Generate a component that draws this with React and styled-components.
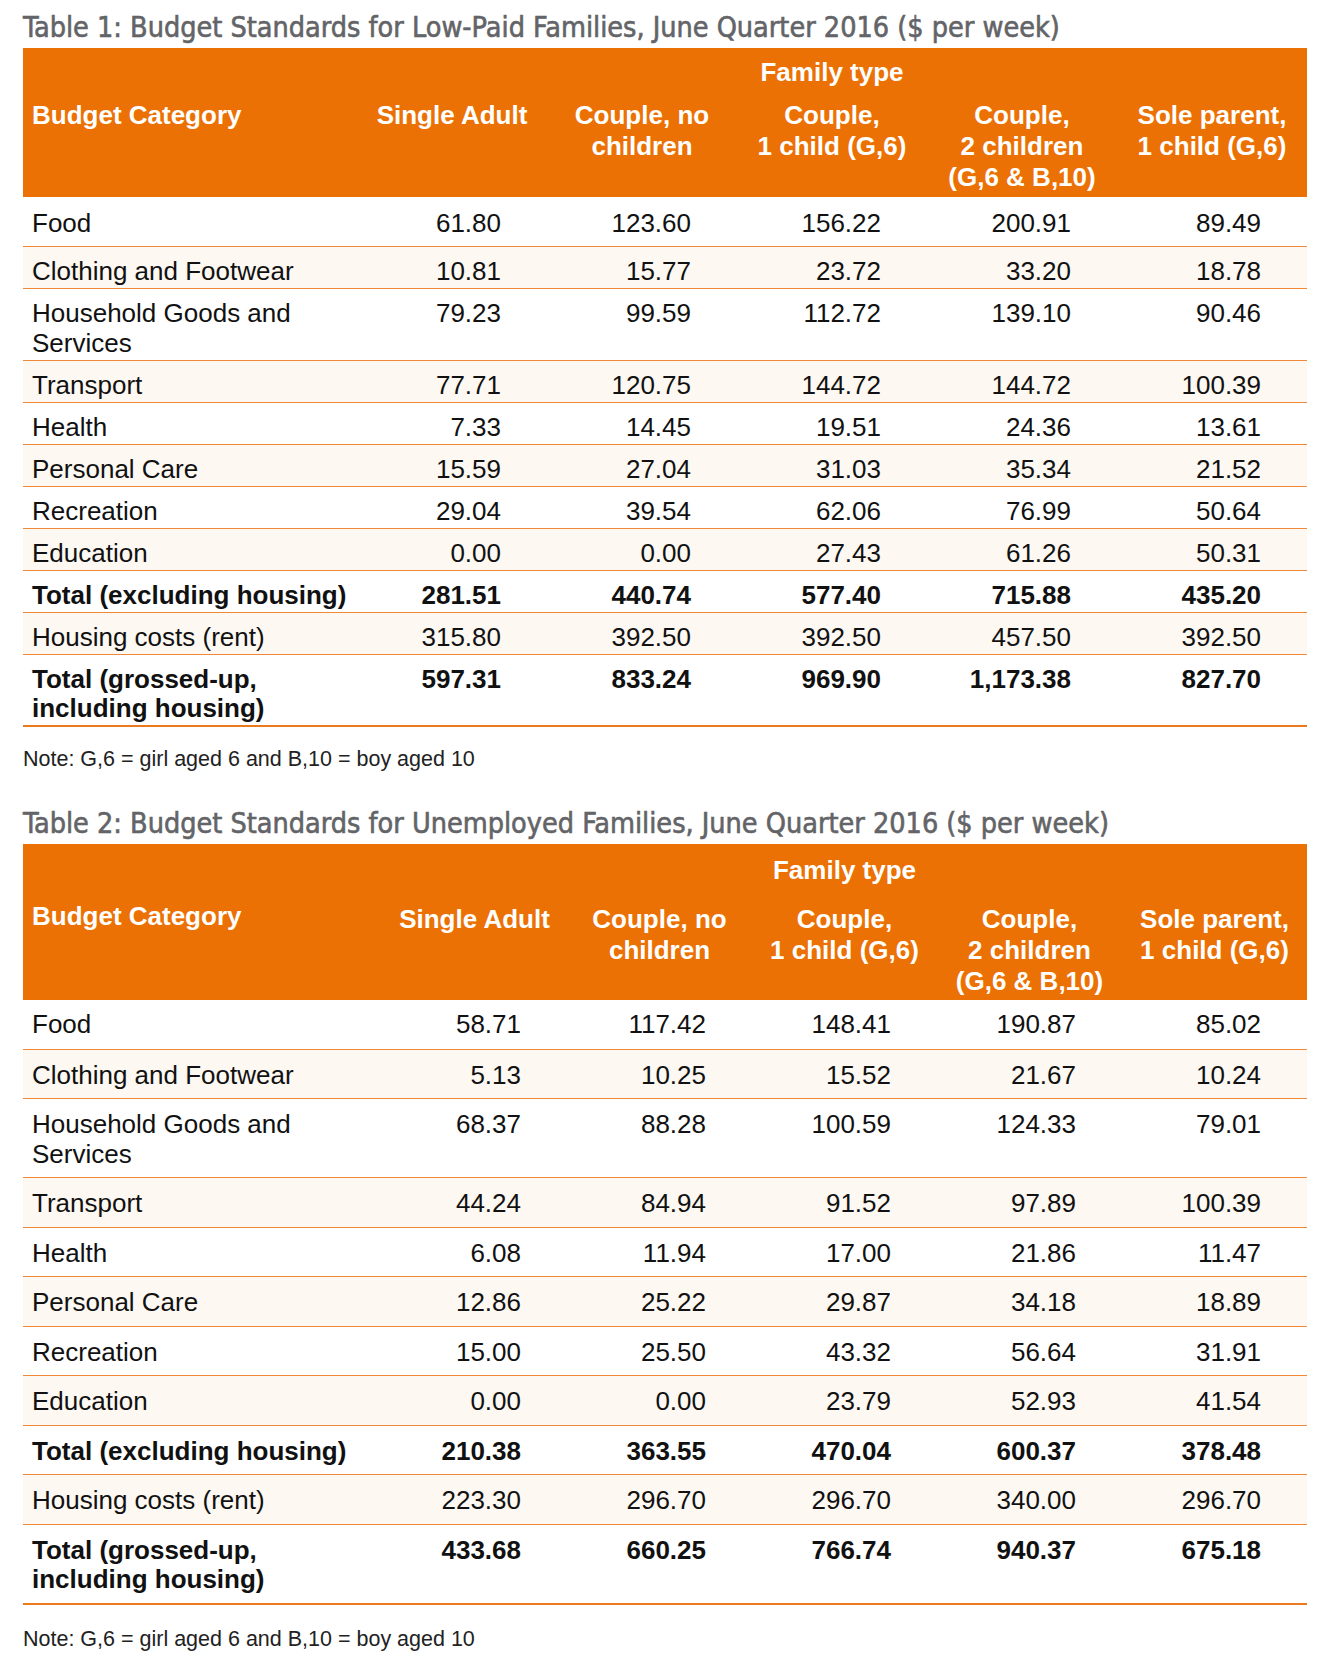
import styled, { createGlobalStyle } from "styled-components";

const GlobalStyle = createGlobalStyle`
  body {
    margin: 0;
    background: #ffffff;
  }
`;

const HEAD_LINES = [
  ["Single Adult"],
  ["Couple, no", "children"],
  ["Couple,", "1 child (G,6)"],
  ["Couple,", "2 children", "(G,6 & B,10)"],
  ["Sole parent,", "1 child (G,6)"],
];

const tables = [
  {
    title: "Table 1: Budget Standards for Low-Paid Families, June Quarter 2016 ($ per week)",
    firstCol: 334,
    numCol: 190,
    head: { top: 9, gap: 12, bottom: 4, lead: 0 },
    body: { first: [12, 7.5], rest: [10, 1.5] },
    noteGap: 20,
    rows: [
      [["Food"], ["61.80", "123.60", "156.22", "200.91", "89.49"]],
      [["Clothing and Footwear"], ["10.81", "15.77", "23.72", "33.20", "18.78"]],
      [["Household Goods and", "Services"], ["79.23", "99.59", "112.72", "139.10", "90.46"]],
      [["Transport"], ["77.71", "120.75", "144.72", "144.72", "100.39"]],
      [["Health"], ["7.33", "14.45", "19.51", "24.36", "13.61"]],
      [["Personal Care"], ["15.59", "27.04", "31.03", "35.34", "21.52"]],
      [["Recreation"], ["29.04", "39.54", "62.06", "76.99", "50.64"]],
      [["Education"], ["0.00", "0.00", "27.43", "61.26", "50.31"]],
      [["Total (excluding housing)"], ["281.51", "440.74", "577.40", "715.88", "435.20"], true],
      [["Housing costs (rent)"], ["315.80", "392.50", "392.50", "457.50", "392.50"]],
      [["Total (grossed-up,", "including housing)"], ["597.31", "833.24", "969.90", "1,173.38", "827.70"], true],
    ],
  },
  {
    title: "Table 2: Budget Standards for Unemployed Families, June Quarter 2016 ($ per week)",
    firstCol: 359,
    numCol: 185,
    head: { top: 11, gap: 18, bottom: 3, lead: 3 },
    body: { first: [10, 9], rest: [11, 8] },
    noteGap: 22,
    rows: [
      [["Food"], ["58.71", "117.42", "148.41", "190.87", "85.02"]],
      [["Clothing and Footwear"], ["5.13", "10.25", "15.52", "21.67", "10.24"]],
      [["Household Goods and", "Services"], ["68.37", "88.28", "100.59", "124.33", "79.01"]],
      [["Transport"], ["44.24", "84.94", "91.52", "97.89", "100.39"]],
      [["Health"], ["6.08", "11.94", "17.00", "21.86", "11.47"]],
      [["Personal Care"], ["12.86", "25.22", "29.87", "34.18", "18.89"]],
      [["Recreation"], ["15.00", "25.50", "43.32", "56.64", "31.91"]],
      [["Education"], ["0.00", "0.00", "23.79", "52.93", "41.54"]],
      [["Total (excluding housing)"], ["210.38", "363.55", "470.04", "600.37", "378.48"], true],
      [["Housing costs (rent)"], ["223.30", "296.70", "296.70", "340.00", "296.70"]],
      [["Total (grossed-up,", "including housing)"], ["433.68", "660.25", "766.74", "940.37", "675.18"], true],
    ],
  },
];

const Lines = ({ lines }) =>
  lines.map((l, i) => (
    <span key={i}>
      {i > 0 && <br />}
      {l}
    </span>
  ));

const BudgetTable = ({ t, first }) => (
  <Block>
    <Title $top={first ? 11 : 35}>{t.title}</Title>
    <Table>
      <colgroup>
        <Col $w={t.firstCol} />
        {HEAD_LINES.map((_, i) => (
          <Col key={i} $w={t.numCol} />
        ))}
      </colgroup>
      <thead>
        <HeadRow>
          <HeadCell $pt={t.head.top} $pb={0} />
          <HeadCell colSpan={5} $pt={t.head.top} $pb={0}>
            Family type
          </HeadCell>
        </HeadRow>
        <HeadRow>
          <HeadCell $left $pt={t.head.gap - t.head.lead} $pb={t.head.bottom + t.head.lead}>
            Budget Category
          </HeadCell>
          {HEAD_LINES.map((lines, i) => (
            <HeadCell key={i} $pt={t.head.gap} $pb={t.head.bottom}>
              <Lines lines={lines} />
            </HeadCell>
          ))}
        </HeadRow>
      </thead>
      <tbody>
        {t.rows.map(([label, values, bold], i) => {
          const [pt, pb] = i === 0 ? t.body.first : t.body.rest;
          return (
            <Row key={i} $shaded={i % 2 === 1} $last={i === t.rows.length - 1}>
              <Cell $bold={bold} $pt={pt} $pb={pb}>
                <Lines lines={label} />
              </Cell>
              {values.map((v, j) => (
                <Cell key={j} $num $bold={bold} $pt={pt} $pb={pb}>
                  {v}
                </Cell>
              ))}
            </Row>
          );
        })}
      </tbody>
    </Table>
    <Note $top={t.noteGap}>Note: G,6 = girl aged 6 and B,10 = boy aged 10</Note>
  </Block>
);

const App = () => (
  <>
    <GlobalStyle />
    <Page>
      {tables.map((t, i) => (
        <BudgetTable key={i} t={t} first={i === 0} />
      ))}
    </Page>
  </>
);

export default App;

const Page = styled.div`
  width: 1284px;
  padding: 0 0 20px 23px;
  display: flex;
  flex-direction: column;
`;

const Block = styled.section`
  display: flex;
  flex-direction: column;
`;

const Title = styled.h2`
  margin: ${(p) => p.$top}px 0 3px;
  font-family: "DejaVu Sans Condensed", "Liberation Sans", sans-serif;
  font-size: 28.5px;
  line-height: 34px;
  font-weight: 400;
  color: #636467;
  -webkit-text-stroke: 0.6px #636467;
  white-space: nowrap;
`;

const Table = styled.table`
  width: 1284px;
  border-collapse: collapse;
  table-layout: fixed;
  font-family: "Liberation Sans", Arial, sans-serif;
`;

const Col = styled.col`
  width: ${(p) => p.$w}px;
`;

const HeadRow = styled.tr`
  background: #ec7104;
`;

const HeadCell = styled.th`
  padding-top: ${(p) => p.$pt}px;
  padding-bottom: ${(p) => p.$pb}px;
  padding-left: ${(p) => (p.$left ? 9 : 4)}px;
  padding-right: 4px;
  color: #ffffff;
  font-size: 26px;
  line-height: 31px;
  font-weight: 700;
  text-align: ${(p) => (p.$left ? "left" : "center")};
  vertical-align: top;
  white-space: nowrap;
`;

const Row = styled.tr`
  background: ${(p) => (p.$shaded ? "#fdf8f2" : "#ffffff")};
  border-bottom: ${(p) => (p.$last ? "2px solid #ec7a1c" : "1px solid #f0883a")};
`;

const Cell = styled.td`
  padding: ${(p) => p.$pt}px ${(p) => (p.$num ? 46 : 9)}px ${(p) => p.$pb}px
    ${(p) => (p.$num ? 0 : 9)}px;
  font-size: 26px;
  line-height: 29.5px;
  font-weight: ${(p) => (p.$bold ? 700 : 400)};
  color: #111111;
  text-align: ${(p) => (p.$num ? "right" : "left")};
  vertical-align: top;
  white-space: nowrap;
`;

const Note = styled.p`
  margin: ${(p) => p.$top}px 0 0;
  font-family: "Liberation Sans", Arial, sans-serif;
  font-size: 21.5px;
  line-height: 25px;
  color: #222222;
`;
